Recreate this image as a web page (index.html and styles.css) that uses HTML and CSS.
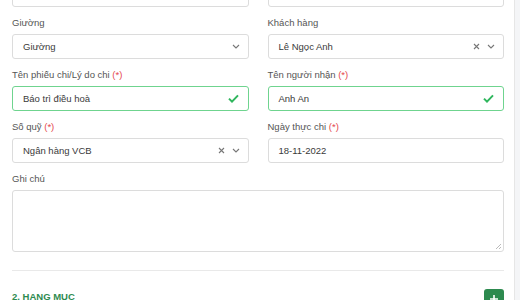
FILE: index.html
```html
<!DOCTYPE html>
<html lang="vi">
<head>
    <meta charset="UTF-8">
    <title>Phiếu chi</title>
    <link rel="stylesheet" href="styles.css">
</head>
<body>
    <div class="card">
        <form class="form-grid">
            <div class="field">
                <div class="control"></div>
            </div>
            <div class="field">
                <div class="control"></div>
            </div>

            <div class="field">
                <label class="label">Giường</label>
                <div class="control select">
                    <span class="value">Giường</span>
                    <span class="icons">
                        <svg class="chevron" width="8" height="5" viewBox="0 0 8 5"><path d="M1 1l3 3 3-3" fill="none" stroke="#777" stroke-width="1.1"/></svg>
                    </span>
                </div>
            </div>
            <div class="field">
                <label class="label">Khách hàng</label>
                <div class="control select">
                    <span class="value">Lê Ngọc Anh</span>
                    <span class="icons">
                        <svg class="clear" width="7" height="7" viewBox="0 0 7 7"><path d="M1 1l5 5M6 1l-5 5" stroke="#777" stroke-width="1.1"/></svg>
                        <svg class="chevron" width="8" height="5" viewBox="0 0 8 5"><path d="M1 1l3 3 3-3" fill="none" stroke="#777" stroke-width="1.1"/></svg>
                    </span>
                </div>
            </div>

            <div class="field">
                <label class="label">Tên phiếu chi/Lý do chi <span class="req">(*)</span></label>
                <div class="control valid">
                    <span class="value">Báo trì điều hoà</span>
                    <svg class="check" width="11" height="9" viewBox="0 0 11 9"><path d="M1 4.6l3 3L10 1.4" fill="none" stroke="#2fb65d" stroke-width="2"/></svg>
                </div>
            </div>
            <div class="field">
                <label class="label">Tên người nhận <span class="req">(*)</span></label>
                <div class="control valid">
                    <span class="value">Anh An</span>
                    <svg class="check" width="11" height="9" viewBox="0 0 11 9"><path d="M1 4.6l3 3L10 1.4" fill="none" stroke="#2fb65d" stroke-width="2"/></svg>
                </div>
            </div>

            <div class="field">
                <label class="label">Số quỹ <span class="req">(*)</span></label>
                <div class="control select">
                    <span class="value">Ngân hàng VCB</span>
                    <span class="icons">
                        <svg class="clear" width="7" height="7" viewBox="0 0 7 7"><path d="M1 1l5 5M6 1l-5 5" stroke="#777" stroke-width="1.1"/></svg>
                        <svg class="chevron" width="8" height="5" viewBox="0 0 8 5"><path d="M1 1l3 3 3-3" fill="none" stroke="#777" stroke-width="1.1"/></svg>
                    </span>
                </div>
            </div>
            <div class="field">
                <label class="label">Ngày thực chi <span class="req">(*)</span></label>
                <div class="control">
                    <span class="value">18-11-2022</span>
                </div>
            </div>

            <div class="field wide">
                <label class="label">Ghi chú</label>
                <div class="control textarea">
                    <svg class="grip" width="7" height="7" viewBox="0 0 7 7"><path d="M6 1L1 6M6 4L4 6" stroke="#aaa" stroke-width="0.8"/></svg>
                </div>
            </div>
        </form>

        <hr class="divider">

        <div class="section-head">
            <h2 class="section-title">2. HANG MUC</h2>
            <button type="button" class="add-btn">
                <svg width="10" height="10" viewBox="0 0 10 10"><path d="M5 1v8M1 5h8" stroke="#fff" stroke-width="1.6"/></svg>
            </button>
        </div>
    </div>
</body>
</html>
```

FILE: styles.css
```css
body {
    margin: 0;
    font-family: "Liberation Sans", Arial, sans-serif;
    font-size: 9.5px;
    color: #333;
    background-color: #f4f5f7;
    overflow: hidden;
}
.card {
    width: 492px;
    height: 400px;
    padding: 0 10px 0 12px;
    background-color: #fff;
    border-right: 1px solid #e6e6e6;
}
.form-grid {
    display: grid;
    grid-template-columns: 1fr 1fr;
    column-gap: 19px;
    row-gap: 8px;
    margin-top: -18px;
}
.field.wide {
    grid-column: 1 / 3;
}
.label {
    display: block;
    line-height: 16px;
    margin-bottom: 3px;
    color: #555;
}
.req {
    color: #e5484d;
}
.control {
    display: flex;
    align-items: center;
    justify-content: space-between;
    box-sizing: border-box;
    height: 25px;
    padding: 0 8px 0 10px;
    border: 1px solid #dcdcdc;
    border-radius: 3px;
    background-color: #fff;
    color: #3a3a3a;
}
.select {
    padding-left: 10px;
}
.icons {
    display: flex;
    align-items: center;
    gap: 7px;
}
.valid {
    border-color: #6fd48f;
}
.check {
    margin-right: 1px;
}
.textarea {
    position: relative;
    height: 62px;
}
.grip {
    position: absolute;
    right: 1px;
    bottom: 1px;
}
.divider {
    border: 0;
    border-top: 1px solid #e9e9e9;
    margin: 18px 0 0 0;
}
.section-head {
    display: flex;
    justify-content: space-between;
    align-items: flex-start;
    margin-top: 18px;
}
.section-title {
    margin: 0;
    line-height: 16px;
    font-size: 9.5px;
    font-weight: bold;
    color: #2e8b4f;
}
.add-btn {
    display: flex;
    align-items: center;
    justify-content: center;
    width: 20px;
    height: 20px;
    padding: 0;
    border: 0;
    border-radius: 3px;
    background-color: #2d8a4f;
}
```
